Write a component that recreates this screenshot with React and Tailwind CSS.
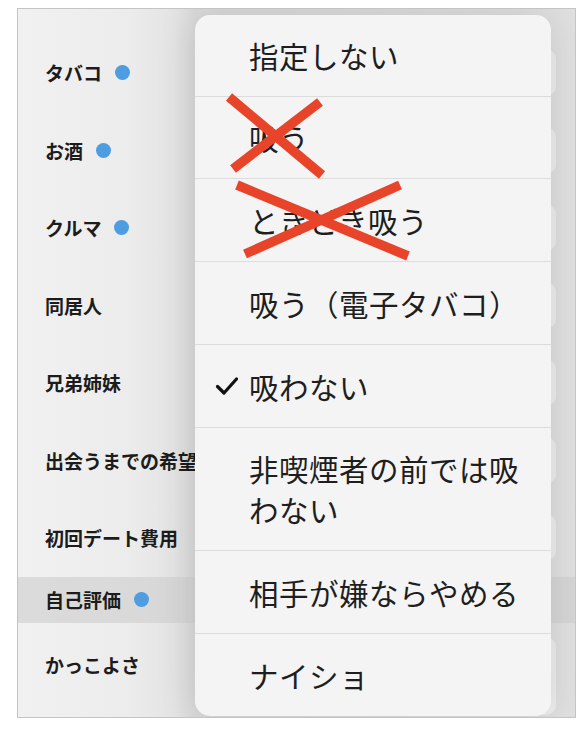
import React from "react";

const labels = [
  { t: "タバコ", dot: true },
  { t: "お酒", dot: true },
  { t: "クルマ", dot: true },
  { t: "同居人", dot: false },
  { t: "兄弟姉妹", dot: false },
  { t: "出会うまでの希望", dot: false },
  { t: "初回デート費用", dot: false },
];

const options = [
  { t: "指定しない", h: "h-[82px]" },
  { t: "吸う", h: "h-[82px]" },
  { t: "ときどき吸う", h: "h-[83px]" },
  { t: "吸う（電子タバコ）", h: "h-[83px]" },
  { t: "吸わない", h: "h-[83px]", check: true },
  { t: "非喫煙者の前では吸わない", h: "h-[123px]" },
  { t: "相手が嫌ならやめる", h: "h-[83px]" },
  { t: "ナイショ", h: "h-[82px]", last: true },
];

function Dot() {
  return <span className="w-[15px] h-[15px] rounded-full bg-[#4d9de0] ml-[13px] shrink-0" />;
}

export default function App() {
  const font = { fontFamily: '"Noto Sans CJK JP", "Noto Sans", sans-serif' };
  return (
    <div className="w-[588px] h-[732px] bg-white pt-[8px] pl-[17px]" style={font}>
      <div className="relative w-[559px] h-[710px] border border-[#c4c4c4] overflow-hidden bg-[linear-gradient(90deg,#f1f1f1_0%,#ececec_20%,#e4e4e4_28%,#d9d9d9_32%,#e0e0e0_100%)]">
        {/* background form rows */}
        <div className="flex flex-col pt-[25px]">
          {labels.map((l) => (
            <div key={l.t} className="h-[77.5px] flex items-center justify-between">
              <div className="flex items-center pl-[27px]">
                <span className="text-[19px] font-bold text-[#1c1c1c] whitespace-nowrap leading-none">{l.t}</span>
                {l.dot && <Dot />}
              </div>
              <div className="w-[60px] h-[47px] rounded-[10px] bg-[#ededed] mr-[19px]" />
            </div>
          ))}
          <div className="h-[46px] flex items-center bg-[#d2d2d2]/70 pl-[27px]">
            <span className="text-[19px] font-bold text-[#1c1c1c] leading-none">自己評価</span>
            <Dot />
          </div>
          <div className="h-[84px] flex items-center justify-between">
            <span className="pl-[27px] text-[19px] font-bold text-[#1c1c1c] leading-none">かっこよさ</span>
            <div className="w-[60px] h-[78px] self-start mt-[14px] rounded-[10px] bg-[#ededed] mr-[19px]" />
          </div>
        </div>

        {/* popover menu */}
        <div className="absolute left-[177px] top-[6px] w-[356px] rounded-[15px] bg-[#f4f4f4] shadow-[0_0_40px_rgba(0,0,0,0.12)] flex flex-col overflow-hidden">
          {options.map((o) => (
            <div
              key={o.t}
              className={`${o.h} flex items-center ${o.last ? "" : "border-b-[1.5px] border-[#dcdcdc]"}`}
            >
              <div className="w-[54px] flex justify-end pr-[10px] shrink-0">
                {o.check && (
                  <svg width="24" height="20" viewBox="0 0 24 20">
                    <path d="M2.5 10.5 L9 17 L21.5 3" fill="none" stroke="#111" strokeWidth="3.2" strokeLinecap="round" strokeLinejoin="round" />
                  </svg>
                )}
              </div>
              <span className="text-[29.5px] leading-[41px] text-[#1e1e1e] pr-[24px] tracking-[0.5px]">{o.t}</span>
            </div>
          ))}
        </div>

        {/* red crosses */}
        <svg className="absolute inset-0 pointer-events-none" width="559" height="710">
          <g stroke="#e8442a" strokeWidth="9.5" strokeLinecap="butt">
            <line x1="211" y1="88" x2="304" y2="166" />
            <line x1="215" y1="160" x2="302" y2="93" />
            <line x1="219" y1="176" x2="390" y2="247" />
            <line x1="227" y1="245" x2="382" y2="176" />
          </g>
        </svg>
      </div>
    </div>
  );
}
